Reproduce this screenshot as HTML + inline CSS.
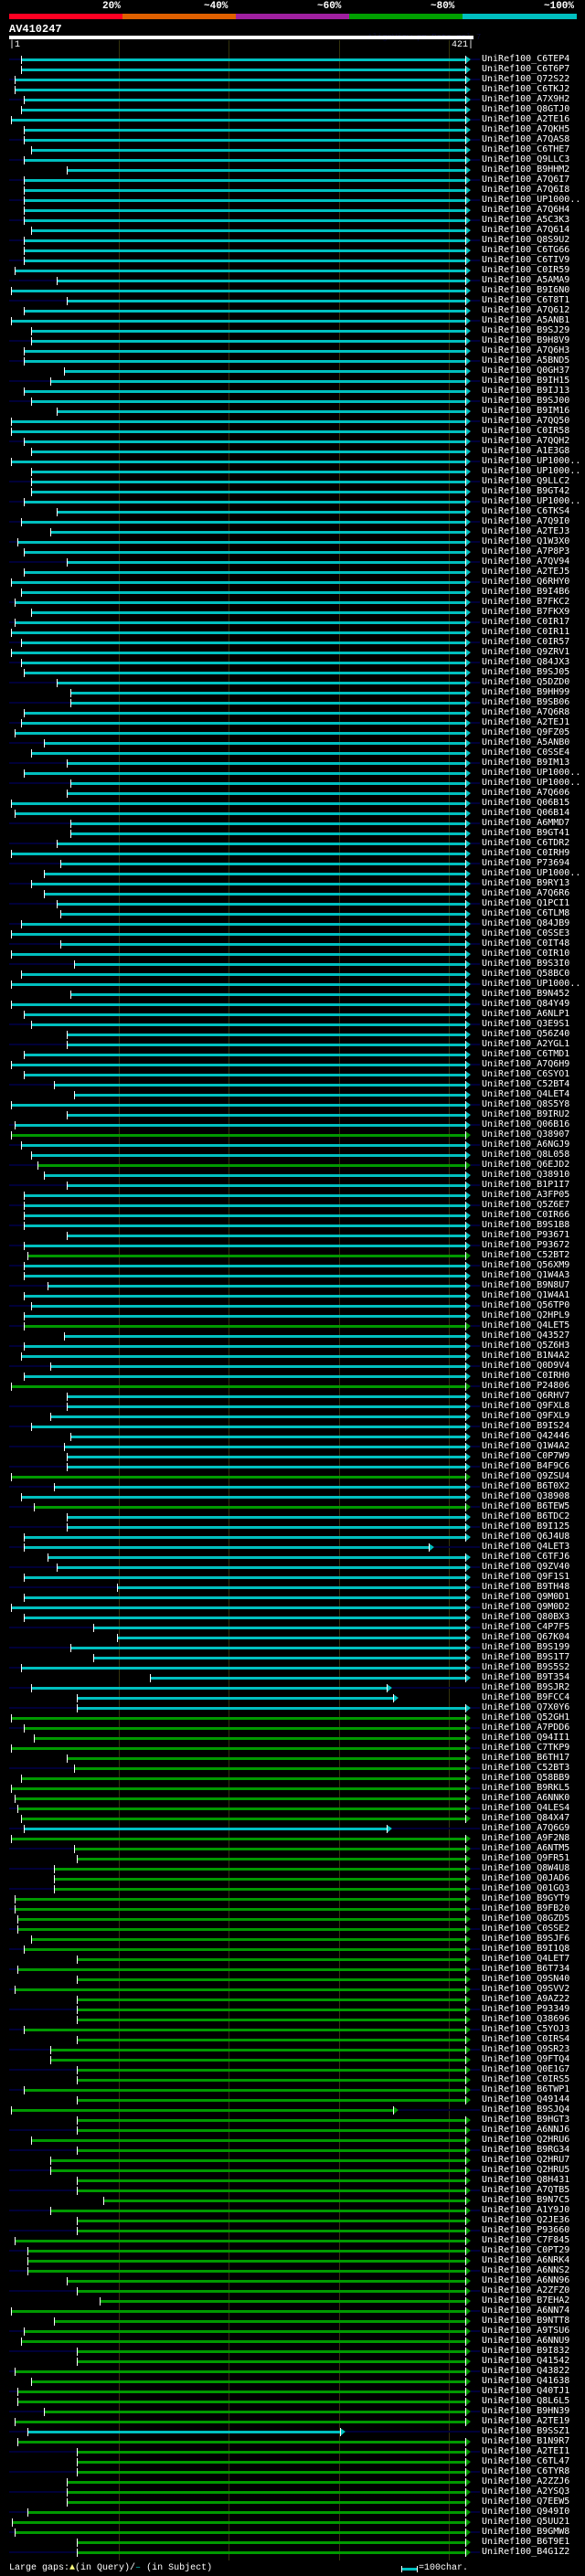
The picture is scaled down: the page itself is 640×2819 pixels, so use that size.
<!DOCTYPE html>
<html><head><meta charset="utf-8">
<style>
html,body{margin:0;padding:0;background:#000;}
body{width:640px;height:2819px;position:relative;overflow:hidden;font-family:"Liberation Mono","DejaVu Sans Mono",monospace;color:#fff;}
.a{position:absolute;}
.pct{position:absolute;top:1px;font-size:11px;font-weight:bold;line-height:12px;}
#labels{position:absolute;left:527px;top:59px;margin:0;font-size:10px;line-height:11px;white-space:pre;color:#fff;}
.g{position:absolute;top:44px;width:1px;height:2758px;background:#33330d;}
</style></head><body>
<div class="pct" style="left:112px">20%</div>
<div class="pct" style="left:223px">~40%</div>
<div class="pct" style="left:347px">~60%</div>
<div class="pct" style="left:471px">~80%</div>
<div class="pct" style="left:595px">~100%</div>
<div class="a" style="left:10px;top:15px;width:124px;height:6px;background:#ff0022"></div>
<div class="a" style="left:134px;top:15px;width:124px;height:6px;background:#e06000"></div>
<div class="a" style="left:258px;top:15px;width:124px;height:6px;background:#a020a0"></div>
<div class="a" style="left:382px;top:15px;width:124px;height:6px;background:#00a000"></div>
<div class="a" style="left:506px;top:15px;width:125px;height:6px;background:#00c0c0"></div>
<div class="a" style="left:10px;top:26px;font-size:12px;font-weight:bold;line-height:13px">AV410247</div>
<div class="a" style="left:402px;top:36px;font-size:9px;line-height:10px;color:#0a0a3a">AlignView.pm Beta rel.7</div>
<div class="a" style="left:10px;top:39px;width:508px;height:4px;background:#fff"></div>
<div class="a" style="left:10px;top:44px;font-size:10px;line-height:11px">|1</div>
<div class="a" style="left:494px;top:44px;font-size:10px;line-height:11px">421|</div>
<div class="g" style="left:130px"></div>
<div class="g" style="left:250px"></div>
<div class="g" style="left:371px"></div>
<div class="g" style="left:491px"></div>
<div id="bars"></div>
<pre id="labels">UniRef100_C6TEP4
UniRef100_C6T6P7
UniRef100_Q72S22
UniRef100_C6TKJ2
UniRef100_A7X9H2
UniRef100_Q8GTJ0
UniRef100_A2TE16
UniRef100_A7QKH5
UniRef100_A7QAS8
UniRef100_C6THE7
UniRef100_Q9LLC3
UniRef100_B9HHM2
UniRef100_A7Q6I7
UniRef100_A7Q6I8
UniRef100_UP1000..
UniRef100_A7Q6H4
UniRef100_A5C3K3
UniRef100_A7Q614
UniRef100_Q8S9U2
UniRef100_C6TG66
UniRef100_C6TIV9
UniRef100_C0IR59
UniRef100_A5AMA9
UniRef100_B9I6N0
UniRef100_C6T8T1
UniRef100_A7Q612
UniRef100_A5ANB1
UniRef100_B9SJ29
UniRef100_B9H8V9
UniRef100_A7Q6H3
UniRef100_A5BND5
UniRef100_Q0GH37
UniRef100_B9IH15
UniRef100_B9IJ13
UniRef100_B9SJ00
UniRef100_B9IM16
UniRef100_A7QQ50
UniRef100_C0IR58
UniRef100_A7QQH2
UniRef100_A1E3G8
UniRef100_UP1000..
UniRef100_UP1000..
UniRef100_Q9LLC2
UniRef100_B9GT42
UniRef100_UP1000..
UniRef100_C6TKS4
UniRef100_A7Q9I0
UniRef100_A2TEJ3
UniRef100_Q1W3X0
UniRef100_A7P8P3
UniRef100_A7QV94
UniRef100_A2TEJ5
UniRef100_Q6RHY0
UniRef100_B9I4B6
UniRef100_B7FKC2
UniRef100_B7FKX9
UniRef100_C0IR17
UniRef100_C0IR11
UniRef100_C0IR57
UniRef100_Q9ZRV1
UniRef100_Q84JX3
UniRef100_B9SJ05
UniRef100_Q5DZD0
UniRef100_B9HH99
UniRef100_B9SB06
UniRef100_A7Q6R8
UniRef100_A2TEJ1
UniRef100_Q9FZ05
UniRef100_A5ANB0
UniRef100_C0SSE4
UniRef100_B9IM13
UniRef100_UP1000..
UniRef100_UP1000..
UniRef100_A7Q606
UniRef100_Q06B15
UniRef100_Q06B14
UniRef100_A6MMD7
UniRef100_B9GT41
UniRef100_C6TDR2
UniRef100_C0IRH9
UniRef100_P73694
UniRef100_UP1000..
UniRef100_B9RY13
UniRef100_A7Q6R6
UniRef100_Q1PCI1
UniRef100_C6TLM8
UniRef100_Q84JB9
UniRef100_C0SSE3
UniRef100_C0IT48
UniRef100_C0IR10
UniRef100_B9S3I0
UniRef100_Q58BC0
UniRef100_UP1000..
UniRef100_B9N452
UniRef100_Q84Y49
UniRef100_A6NLP1
UniRef100_Q3E9S1
UniRef100_Q56Z40
UniRef100_A2YGL1
UniRef100_C6TMD1
UniRef100_A7Q6H9
UniRef100_C6SYO1
UniRef100_C52BT4
UniRef100_Q4LET4
UniRef100_Q8S5Y8
UniRef100_B9IRU2
UniRef100_Q06B16
UniRef100_Q38907
UniRef100_A6NGJ9
UniRef100_Q8L058
UniRef100_Q6EJD2
UniRef100_Q38910
UniRef100_B1P1I7
UniRef100_A3FP05
UniRef100_Q5Z6E7
UniRef100_C0IR66
UniRef100_B9S1B8
UniRef100_P93671
UniRef100_P93672
UniRef100_C52BT2
UniRef100_Q56XM9
UniRef100_Q1W4A3
UniRef100_B9N8U7
UniRef100_Q1W4A1
UniRef100_Q56TP0
UniRef100_Q2HPL9
UniRef100_Q4LET5
UniRef100_Q43527
UniRef100_Q5Z6H3
UniRef100_B1N4A2
UniRef100_Q0D9V4
UniRef100_C0IRH0
UniRef100_P24806
UniRef100_Q6RHV7
UniRef100_Q9FXL8
UniRef100_Q9FXL9
UniRef100_B9IS24
UniRef100_Q42446
UniRef100_Q1W4A2
UniRef100_C0P7W9
UniRef100_B4F9C6
UniRef100_Q9ZSU4
UniRef100_B6T0X2
UniRef100_Q38908
UniRef100_B6TEW5
UniRef100_B6TDC2
UniRef100_B9I125
UniRef100_Q6J4U8
UniRef100_Q4LET3
UniRef100_C6TFJ6
UniRef100_Q9ZV40
UniRef100_Q9F1S1
UniRef100_B9TH48
UniRef100_Q9M0D1
UniRef100_Q9M0D2
UniRef100_Q80BX3
UniRef100_C4P7F5
UniRef100_Q67K04
UniRef100_B9S199
UniRef100_B9S1T7
UniRef100_B9S5S2
UniRef100_B9T354
UniRef100_B9SJR2
UniRef100_B9FCC4
UniRef100_Q7X0Y6
UniRef100_Q52GH1
UniRef100_A7PDD6
UniRef100_Q94II1
UniRef100_C7TKP9
UniRef100_B6TH17
UniRef100_C52BT3
UniRef100_Q58BB9
UniRef100_B9RKL5
UniRef100_A6NNK0
UniRef100_Q4LES4
UniRef100_Q84X47
UniRef100_A7Q6G9
UniRef100_A9F2N8
UniRef100_A6NTM5
UniRef100_Q9FR51
UniRef100_Q8W4U8
UniRef100_Q0JAD6
UniRef100_Q01GQ3
UniRef100_B9GYT9
UniRef100_B9FB20
UniRef100_Q8GZD5
UniRef100_C0SSE2
UniRef100_B9SJF6
UniRef100_B9I1Q8
UniRef100_Q4LET7
UniRef100_B6T734
UniRef100_Q9SN40
UniRef100_Q9SVV2
UniRef100_A9AZ22
UniRef100_P93349
UniRef100_Q38696
UniRef100_C5YOJ3
UniRef100_C0IRS4
UniRef100_Q9SR23
UniRef100_Q9FTQ4
UniRef100_Q0E1G7
UniRef100_C0IRS5
UniRef100_B6TWP1
UniRef100_Q49144
UniRef100_B9SJQ4
UniRef100_B9HGT3
UniRef100_A6NNJ6
UniRef100_Q2HRU6
UniRef100_B9RG34
UniRef100_Q2HRU7
UniRef100_Q2HRU5
UniRef100_Q8H431
UniRef100_A7QTB5
UniRef100_B9N7C5
UniRef100_A1Y9J0
UniRef100_Q2JE36
UniRef100_P93660
UniRef100_C7F845
UniRef100_C0PT29
UniRef100_A6NRK4
UniRef100_A6NNS2
UniRef100_A6NN96
UniRef100_A2ZFZ0
UniRef100_B7EHA2
UniRef100_A6NN74
UniRef100_B9NTT8
UniRef100_A9TSU6
UniRef100_A6NNU9
UniRef100_B9I832
UniRef100_Q41542
UniRef100_Q43822
UniRef100_Q41638
UniRef100_Q40TJ1
UniRef100_Q8L6L5
UniRef100_B9HN39
UniRef100_A2TE19
UniRef100_B9SSZ1
UniRef100_B1N9R7
UniRef100_A2TEI1
UniRef100_C6TL47
UniRef100_C6TYR8
UniRef100_A2ZZJ6
UniRef100_A2YSQ3
UniRef100_Q7EEW5
UniRef100_Q949I0
UniRef100_Q5UU21
UniRef100_B9GMW8
UniRef100_B6T9E1
UniRef100_B4G1Z2</pre>
<div class="a" style="left:10px;top:2805px;font-size:10px;line-height:11px;white-space:pre">Large gaps:<span style="color:#ffff80">▲</span>(in Query)/<span style="color:#00c0c0">–</span> (in Subject)</div>
<div class="a" style="left:439px;top:2808px;width:1px;height:7px;background:#fff"></div>
<div class="a" style="left:440px;top:2810px;width:16px;height:3px;background:#00c0c0"></div>
<div class="a" style="left:456px;top:2808px;width:1px;height:7px;background:#fff"></div>
<div class="a" style="left:458px;top:2805px;font-size:10px;line-height:11px">=100char.</div>
<script>
var S=[23,23,16,16,26,23,12,26,26,34,26,73,26,26,26,26,26,34,26,26,26,16,62,12,73,26,12,34,34,26,26,70,55,26,34,62,12,12,26,34,12,34,34,34,26,62,23,
55,19,26,73,26,12,23,16,34,16,12,23,12,23,26,62,77,77,26,23,16,48,34,73,26,77,73,12,16,77,77,62,12,66,48,34,48,62,66,23,12,66,12,81,23,12,77,
12,26,34,73,73,26,12,26,59,81,12,73,16,12,23,34,41,48,73,26,26,26,26,73,26,30,26,26,52,26,34,26,26,70,26,23,55,26,12,73,73,55,34,77,70,73,
73,12,59,23,37,73,73,26,26,52,62,26,128,26,12,26,102,128,77,102,23,164,34,84,84,12,26,37,12,73,81,23,12,16,19,23,26,12,81,84,59,59,59,16,16,
19,19,34,26,84,19,84,16,84,84,84,26,84,55,55,84,84,26,84,12,84,84,34,84,55,55,84,84,113,55,84,84,16,30,30,30,73,84,109,12,59,26,23,84,84,16,34,19,19,48,16,30,19,84,84,84,73,73,73,30,
13,16,84,84];
var G={107:1,110:1,119:1,126:1,132:1,141:1,144:1};
for(var i=165;i<249;i++)G[i]=1;G[176]=0;G[236]=0;
var E={148:469,162:423,163:430,176:423,204:430,236:372};
var h='';
for(var i=0;i<249;i++){
 var y=65+i*11,s=S[i]||20,c=G[i]?'#009900':'#00c0c0',e=E[i]||509;
 if(i%2==0&&s>12)h+='<div class="a" style="left:10px;top:'+(y-1)+'px;width:'+(s-10)+'px;height:2px;background:#000038"></div>';
 h+='<div class="a" style="left:'+s+'px;top:'+(y-1)+'px;width:'+(e-s)+'px;height:3px;background:'+c+'"></div>';
 h+='<div class="a" style="left:'+s+'px;top:'+(y-4)+'px;width:1px;height:9px;background:#fff"></div>';
 h+='<div class="a" style="left:'+e+'px;top:'+(y-4)+'px;width:0;height:0;border-top:4px solid transparent;border-bottom:5px solid transparent;border-left:6px solid '+c+'"></div>';
 h+='<div class="a" style="left:'+e+'px;top:'+(y-4)+'px;width:1px;height:9px;background:#fff"></div>';
 if(i%2==0)h+='<div class="a" style="left:'+(e+6)+'px;top:'+(y-1)+'px;width:'+(525-e-6)+'px;height:2px;background:#000038"></div>';
}
document.getElementById('bars').innerHTML=h;
</script>
</body></html>
